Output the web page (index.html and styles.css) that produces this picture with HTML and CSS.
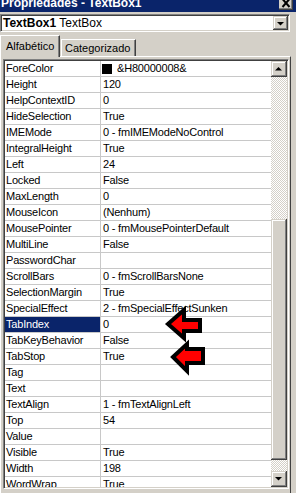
FILE: index.html
```html
<!DOCTYPE html>
<html lang="pt">
  <head>
    <meta charset="UTF-8" />
    <title>Propriedades - TextBox1</title>
    <link rel="stylesheet" href="styles.css">
  </head>
  <body>
    <div class="window">
      <div class="titlebar">
        <span class="title">Propriedades - TextBox1</span>
        <span class="close">
          <svg width="14" height="10" viewBox="0 0 14 10">
            <path d="M3.5 -1 L10.5 7 M10.5 -1 L3.5 7" stroke="#000" stroke-width="2" />
          </svg>
        </span>
      </div>

      <div class="combo">
        <span class="combo-text"><b>TextBox1</b> TextBox</span>
        <span class="drop-btn">
          <svg width="15" height="14" viewBox="0 0 15 14">
            <path d="M4 6 H11 L7.5 9.5 Z" fill="#000" />
          </svg>
        </span>
      </div>

      <div class="tabs">
        <div class="tab active">Alfabético</div>
        <div class="tab">Categorizado</div>
      </div>

      <div class="panel">
        <div class="grid">
          <div class="rows">
            <div class="row"><div class="name">ForeColor</div><div class="value"><span class="swatch"></span>&amp;H80000008&amp;</div></div>
            <div class="row"><div class="name">Height</div><div class="value">120</div></div>
            <div class="row"><div class="name">HelpContextID</div><div class="value">0</div></div>
            <div class="row"><div class="name">HideSelection</div><div class="value">True</div></div>
            <div class="row"><div class="name">IMEMode</div><div class="value">0 - fmIMEModeNoControl</div></div>
            <div class="row"><div class="name">IntegralHeight</div><div class="value">True</div></div>
            <div class="row"><div class="name">Left</div><div class="value">24</div></div>
            <div class="row"><div class="name">Locked</div><div class="value">False</div></div>
            <div class="row"><div class="name">MaxLength</div><div class="value">0</div></div>
            <div class="row"><div class="name">MouseIcon</div><div class="value">(Nenhum)</div></div>
            <div class="row"><div class="name">MousePointer</div><div class="value">0 - fmMousePointerDefault</div></div>
            <div class="row"><div class="name">MultiLine</div><div class="value">False</div></div>
            <div class="row"><div class="name">PasswordChar</div><div class="value"></div></div>
            <div class="row"><div class="name">ScrollBars</div><div class="value">0 - fmScrollBarsNone</div></div>
            <div class="row"><div class="name">SelectionMargin</div><div class="value">True</div></div>
            <div class="row"><div class="name">SpecialEffect</div><div class="value">2 - fmSpecialEffectSunken</div></div>
            <div class="row selected"><div class="name">TabIndex</div><div class="value">0</div></div>
            <div class="row"><div class="name">TabKeyBehavior</div><div class="value">False</div></div>
            <div class="row"><div class="name">TabStop</div><div class="value">True</div></div>
            <div class="row"><div class="name">Tag</div><div class="value"></div></div>
            <div class="row"><div class="name">Text</div><div class="value"></div></div>
            <div class="row"><div class="name">TextAlign</div><div class="value">1 - fmTextAlignLeft</div></div>
            <div class="row"><div class="name">Top</div><div class="value">54</div></div>
            <div class="row"><div class="name">Value</div><div class="value"></div></div>
            <div class="row"><div class="name">Visible</div><div class="value">True</div></div>
            <div class="row"><div class="name">Width</div><div class="value">198</div></div>
            <div class="row"><div class="name">WordWrap</div><div class="value">True</div></div>
          </div>

          <div class="scrollbar">
            <div class="sb-btn">
              <svg width="16" height="16" viewBox="0 0 16 16"><path d="M4 9.5 H11 L7.5 6 Z" fill="#000" /></svg>
            </div>
            <div class="sb-track top-track"></div>
            <div class="sb-thumb"></div>
            <div class="sb-track bottom-track"></div>
            <div class="sb-btn">
              <svg width="16" height="16" viewBox="0 0 16 16"><path d="M4 6 H11 L7.5 9.5 Z" fill="#000" /></svg>
            </div>
          </div>
        </div>
      </div>

      <!-- red arrows drawn over the grid -->
      <svg class="arrows" width="296" height="493" viewBox="0 0 296 493">
        <path d="M168 324 L184 310 L184 320 L200 320 L200 331 L184 331 L184 338 Z" />
        <path d="M173 357 L187 344 L187 349 L203 349 L203 363 L187 363 L187 371 Z" />
      </svg>
    </div>
  </body>
</html>
```

FILE: styles.css
```css
body {
  margin: 0;
  background-color: #d4d0c8;
  font-family: "Liberation Sans", Arial, sans-serif;
  font-size: 11px;
  color: #000;
  overflow: hidden;
}
.window {
  position: relative;
  width: 296px;
  height: 493px;
  overflow: hidden;
}
.titlebar {
  display: flex;
  align-items: flex-start;
  height: 12px;
  background-color: #0a246a;
  overflow: hidden;
}
.title {
  margin: -4px 0 0 1px;
  color: #fff;
  font-weight: bold;
  font-size: 12px;
  line-height: 14px;
  white-space: nowrap;
}
.close {
  display: block;
  width: 14px;
  height: 10px;
  margin: 0 3px 0 auto;
  background-color: #d4d0c8;
  box-shadow: inset -1px -1px #404040, inset -2px -2px #808080;
}
.close svg {
  display: block;
}
.combo {
  display: flex;
  align-items: stretch;
  height: 18px;
  margin: 2px 6px 0 0;
  padding: 1px;
  box-sizing: border-box;
  background-color: #fff;
  border: 1px solid;
  border-color: #808080 #fff #fff #808080;
  box-shadow: inset 1px 1px #404040, inset -1px -1px #d4d0c8;
}
.combo-text {
  flex: 1;
  padding: 0 0 0 1px;
  font-size: 12px;
  line-height: 15px;
  white-space: nowrap;
}
.drop-btn {
  display: block;
  width: 15px;
  height: 14px;
  background-color: #d4d0c8;
  box-shadow: inset -1px -1px #404040, inset 1px 1px #d4d0c8,
    inset -2px -2px #808080, inset 2px 2px #fff;
}
.drop-btn svg {
  display: block;
}
.tabs {
  display: flex;
  align-items: flex-end;
  height: 21px;
  margin-top: 3px;
}
.tab {
  box-sizing: border-box;
  height: 17px;
  width: 75px;
  margin-left: 1px;
  padding: 2px 0 0 3px;
  line-height: 13px;
  border-top: 1px solid #fff;
  border-left: 1px solid #fff;
  border-right: 1px solid #404040;
  box-shadow: inset -1px 0 #808080;
  white-space: nowrap;
}
.tab.active {
  position: relative;
  z-index: 1;
  width: 60px;
  height: 22px;
  margin: 0 0 -1px 0;
  padding: 4px 0 0 5px;
  background-color: #d4d0c8;
}
.panel {
  box-sizing: border-box;
  width: 291px;
  height: 440px;
  border-top: 1px solid #fff;
  border-left: 1px solid #fff;
  border-right: 1px solid #404040;
}
.grid {
  display: flex;
  width: 286px;
  height: 430px;
  margin: 2px 0 0 2px;
  box-sizing: border-box;
  border: 1px solid;
  border-color: #808080 #fff #fff #808080;
  box-shadow: inset 1px 1px #404040, inset -1px -1px #d4d0c8;
  padding: 1px;
}
.rows {
  width: 266px;
  height: 426px;
  overflow: hidden;
  background-color: #fff;
  letter-spacing: -0.2px;
}
.row {
  display: flex;
  height: 16px;
  box-sizing: border-box;
  border-bottom: 1px solid #c8c8c8;
  line-height: 15px;
  white-space: nowrap;
}
.name {
  width: 96px;
  padding-left: 1px;
  box-sizing: border-box;
  border-right: 1px solid #c8c8c8;
  overflow: hidden;
}
.value {
  flex: 1;
  display: flex;
  align-items: center;
  padding-left: 2px;
  overflow: hidden;
}
.row.selected .name {
  background-color: #0a246a;
  color: #fff;
}
.swatch {
  display: inline-block;
  width: 10px;
  height: 10px;
  margin: 0 5px 0 -1px;
  background-color: #000;
}
.scrollbar {
  display: flex;
  flex-direction: column;
  width: 16px;
}
.sb-btn,
.sb-thumb {
  background-color: #d4d0c8;
  box-shadow: inset -1px -1px #404040, inset 1px 1px #d4d0c8,
    inset -2px -2px #808080, inset 2px 2px #fff;
}
.sb-btn {
  height: 16px;
}
.sb-btn svg {
  display: block;
}
.sb-track {
  background: repeating-conic-gradient(#fff 0 25%, #d4d0c8 0 50%) 0 0 / 2px 2px;
}
.top-track {
  height: 142px;
}
.sb-thumb {
  height: 241px;
}
.bottom-track {
  height: 11px;
}
.arrows {
  position: absolute;
  left: 0;
  top: 0;
  pointer-events: none;
}
.arrows path {
  fill: #ff0000;
  stroke: #000;
  stroke-width: 4;
  stroke-linejoin: miter;
}
```
